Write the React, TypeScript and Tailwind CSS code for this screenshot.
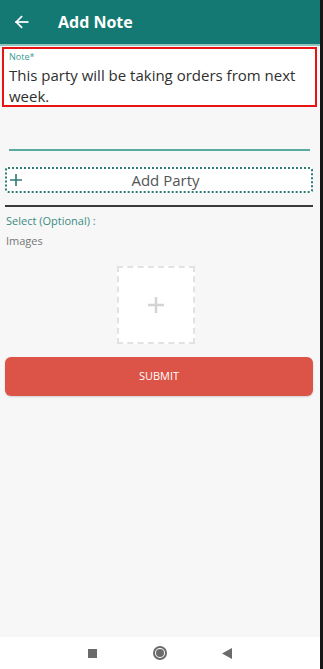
import React from "react";

export default function App() {
  return (
    <div className="flex h-[669px] w-[323px] bg-[#161616]" style={{ fontFamily: '"Open Sans", sans-serif' }}>
      <div className="flex h-full w-[320px] flex-col bg-[#f7f7f7]">
        <div className="flex h-[44px] items-center bg-[#147873] pl-[14px]">
          <svg width="15" height="14" viewBox="0 0 16 16" fill="none" stroke="white" strokeWidth="2" strokeLinecap="square">
            <path d="M15 8H2" />
            <path d="M8 2L2 8l6 6" />
          </svg>
          <span className="ml-[29px] text-[16px] font-bold text-white">Add Note</span>
        </div>
        <div className="h-[2px] bg-[#8fc3bd]" />
        <div className="ml-[2px] mr-[3px] mt-[1px] h-[60px] border-2 border-[#e81414] bg-white px-[5px]">
          <div className="mt-[2px] text-[9px] leading-[12px] text-[#3a9a8f]">Note*</div>
          <div className="mt-[2px] text-[15px] leading-[21px] text-[#2f2f2f]">
            This party will be taking orders from next week.
          </div>
        </div>
        <div className="ml-[9px] mr-[10px] mt-[42px] h-[2px] bg-[#58ab9f]" />
        <div className="ml-[5px] mr-[7px] mt-[16px] flex h-[26px] items-center rounded-[3px] border-2 border-dotted border-[#2e7d74] bg-white">
          <svg width="12" height="12" viewBox="0 0 12 12" className="ml-[3px]" stroke="#2e7d74" strokeWidth="1.6">
            <path d="M6 0v12M0 6h12" />
          </svg>
          <span className="flex-1 pr-[2px] text-center text-[15px] text-[#555]">Add Party</span>
        </div>
        <div className="ml-[5px] mr-[7px] mt-[12px] h-[2px] bg-[#3a3a3a]" />
        <div className="ml-[6px] mt-[6px] text-[11px] leading-[15px] text-[#3c8b82]">Select (Optional) :</div>
        <div className="ml-[6px] mt-[5px] text-[11px] leading-[15px] text-[#777]">Images</div>
        <div className="mt-[18px] flex justify-center pr-[9px]">
          <div className="flex h-[78px] w-[78px] items-center justify-center border-2 border-dashed border-[#e2e2e2] bg-white">
            <svg width="16" height="16" viewBox="0 0 16 16" stroke="#d4d4d4" strokeWidth="2.5">
              <path d="M8 0v16M0 8h16" />
            </svg>
          </div>
        </div>
        <div className="ml-[5px] mr-[7px] mt-[13px] flex h-[39px] items-center justify-center rounded-[6px] bg-[#dc5447] shadow-[0_1px_2px_rgba(0,0,0,0.15)]">
          <span className="text-[11px] text-white">SUBMIT</span>
        </div>
        <div className="flex-1" />
        <div className="flex h-[32px] items-center justify-center bg-white">
          <div className="h-[9px] w-[9px] bg-[#6a6a6a]" />
          <div className="ml-[56px] flex h-[14px] w-[14px] items-center justify-center rounded-full border-2 border-[#6a6a6a]">
            <div className="h-[8px] w-[8px] rounded-full bg-[#6a6a6a]" />
          </div>
          <svg width="10" height="11" viewBox="0 0 10 11" className="ml-[55px]">
            <path d="M10 0v11L0 5.5z" fill="#6a6a6a" />
          </svg>
        </div>
      </div>
    </div>
  );
}
